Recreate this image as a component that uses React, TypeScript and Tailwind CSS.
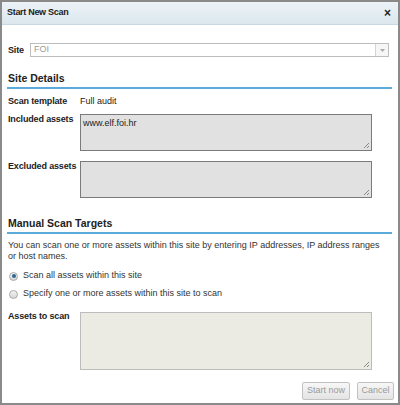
export default function App() {
  const label = "text-[9px] leading-[12px] font-bold tracking-[-0.15px] text-[#222] whitespace-nowrap";
  const header = "text-[10.5px] leading-[12px] font-bold text-[#222] pl-[1px] pb-[3px] border-b-2 border-[#5aabdc] w-[385px]";
  return (
    <div className="w-[400px] h-[405px] bg-[#8a8a8a] p-[2px] font-['Liberation_Sans',Arial,sans-serif] text-[#222]">
      <div className="w-full h-full bg-white flex flex-col">
        <div className="h-[23px] bg-gradient-to-b from-[#edf3f7] to-[#dbe7ee] border-b border-[#c8d8e2] flex items-center justify-between pl-[5px] pr-[7px]">
          <span className="font-bold text-[9px] tracking-[-0.3px] text-[#222]">Start New Scan</span>
          <span className="font-bold text-[12px] leading-none text-[#222]">×</span>
        </div>
        <div className="flex-1 flex flex-col pl-[5px] pr-[4px]">
          <div className="flex items-center mt-[18px] h-[14px]">
            <span className={label + " w-[23px] pl-[1px]"}>Site</span>
            <div className="w-[359px] h-[14px] border border-[#bdbdbd] flex items-center justify-between pl-[3px]">
              <span className="text-[#9a9a9a] text-[9px]">FOI</span>
              <div className="w-[13px] h-full border-l border-[#d4d4d4] bg-[#f6f6f6] flex items-center justify-center">
                <svg width="5" height="3" viewBox="0 0 5 3"><path d="M0 0h5L2.5 3z" fill="#aaa" /></svg>
              </div>
            </div>
          </div>
          <div className={header + " mt-[15px]"}>Site Details</div>
          <div className="flex mt-[6px] h-[12px] items-center">
            <span className={label + " w-[73px] pl-[1px]"}>Scan template</span>
            <span className="text-[9px] leading-[12px]">Full audit</span>
          </div>
          <div className="flex mt-[7px]">
            <span className={label + " w-[73px] pl-[1px] -mt-[1px]"}>Included assets</span>
            <div className="relative w-[292px] h-[37px] bg-[#e1e1e1] border border-[#7b7b7b] pl-[2px] pt-[2px] text-[9px] leading-[12px]">
              www.elf.foi.hr
              <Grip />
            </div>
          </div>
          <div className="flex mt-[10px]">
            <span className={label + " w-[73px] pl-[1px] -mt-[1px]"}>Excluded assets</span>
            <div className="relative w-[292px] h-[37px] bg-[#e1e1e1] border border-[#7b7b7b]">
              <Grip />
            </div>
          </div>
          <div className={header + " mt-[19px]"}>Manual Scan Targets</div>
          <div className="mt-[6px] pl-[1px] text-[9px] leading-[11px] text-[#333] w-[376px]">
            You can scan one or more assets within this site by entering IP addresses, IP address ranges or host names.
          </div>
          <div className="flex items-center mt-[8px] h-[12px] pl-[2px]">
            <Radio checked />
            <span className="ml-[5px] text-[9px] text-[#333]">Scan all assets within this site</span>
          </div>
          <div className="flex items-center mt-[6px] h-[12px] pl-[2px]">
            <Radio />
            <span className="ml-[5px] text-[9px] text-[#333]">Specify one or more assets within this site to scan</span>
          </div>
          <div className="flex mt-[12px]">
            <span className={label + " w-[73px] pl-[1px] -mt-[2px]"}>Assets to scan</span>
            <div className="relative w-[292px] h-[58px] bg-[#ebebe4] border border-[#bdbdbd]">
              <Grip />
            </div>
          </div>
          <div className="flex justify-end gap-[7px] mt-[12px]">
            <div className="h-[18px] w-[48px] border border-[#c2c2c2] rounded-[2px] bg-gradient-to-b from-[#f7f7f7] to-[#e4e4e4] text-[#9a9a9a] text-[9px] flex items-center justify-center">Start now</div>
            <div className="h-[18px] w-[37px] border border-[#c2c2c2] rounded-[2px] bg-gradient-to-b from-[#f7f7f7] to-[#e4e4e4] text-[#9a9a9a] text-[9px] flex items-center justify-center">Cancel</div>
          </div>
        </div>
      </div>
    </div>
  );
}

function Grip() {
  return (
    <svg className="absolute right-[1px] bottom-[1px]" width="7" height="7" viewBox="0 0 7 7">
      <path d="M6 1L1 6M6 4L4 6" stroke="#888" strokeWidth="1" />
    </svg>
  );
}

function Radio({ checked }: { checked?: boolean }) {
  return (
    <div className="w-[9px] h-[9px] rounded-full border border-[#a8a8a8] bg-gradient-to-b from-[#f4f4f4] to-[#d6d6d6] flex items-center justify-center">
      {checked && <div className="w-[4px] h-[4px] rounded-full bg-[#2f6690]" />}
    </div>
  );
}
